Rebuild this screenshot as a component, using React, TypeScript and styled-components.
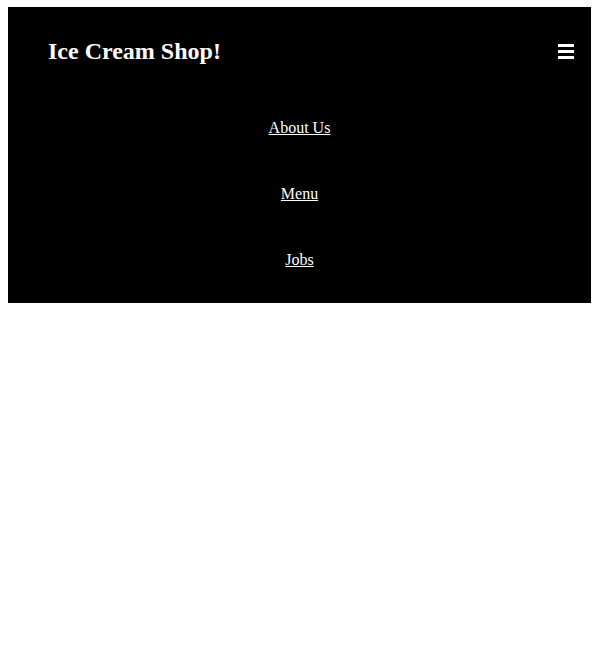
import React from 'react';
import styled, { createGlobalStyle } from 'styled-components';

const GlobalStyle = createGlobalStyle`
  body {
    margin: 7px 7px 0 8px;
    background: #fff;
    font-family: "Liberation Serif", "Times New Roman", serif;
  }
`;

const Nav = styled.nav`
  background: #000;
  color: #fff;
  padding-top: 1px;
  padding-bottom: 10px;
`;

const TopBar = styled.div`
  display: flex;
  align-items: center;
  justify-content: space-between;
  height: 87px;
  padding: 0 17px 0 40px;
`;

const Logo = styled.h2`
  margin: 0;
  font-size: 24px;
  font-weight: bold;
`;

const Burger = styled.button`
  display: flex;
  flex-direction: column;
  gap: 3px;
  width: 16px;
  padding: 0;
  background: none;
  border: 0;
  cursor: pointer;
`;

const Bar = styled.span`
  display: block;
  height: 3px;
  background: #fff;
`;

const Links = styled.ul`
  list-style: none;
  margin: 0;
  padding: 0;
`;

const Item = styled.li`
  display: flex;
  align-items: center;
  justify-content: center;
  height: 66px;

  a {
    color: #fff;
    font-size: 16px;
  }
`;

const links = ['About Us', 'Menu', 'Jobs'];

const App = () => {
  return (
    <>
      <GlobalStyle />
      <Nav>
        <TopBar>
          <Logo>Ice Cream Shop!</Logo>
          <Burger aria-label="menu">
            <Bar />
            <Bar />
            <Bar />
          </Burger>
        </TopBar>
        <Links>
          {links.map((l) => (
            <Item key={l}>
              <a href="#">{l}</a>
            </Item>
          ))}
        </Links>
      </Nav>
    </>
  );
};

export default App;
